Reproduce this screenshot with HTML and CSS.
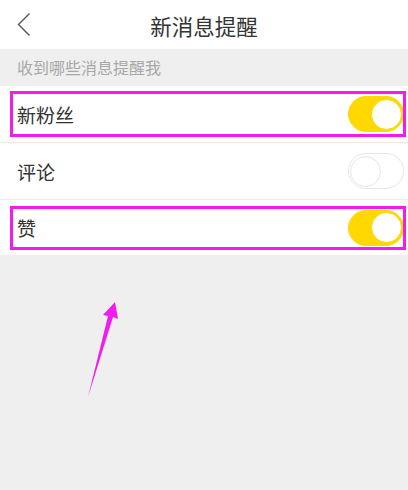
FILE: index.html
```html
<!DOCTYPE html>
<html lang="zh-CN">

<head>
  <title>新消息提醒</title>
  <meta charset="utf-8">
  <meta name="viewport" content="width=device-width, initial-scale=1">

  <link rel="stylesheet" href="styles.css">
</head>

<body>

  <div class="page">

    <div class="header">
      <div class="back">
        <svg width="14" height="26" viewBox="0 0 14 26">
          <polyline points="12.5,1.5 1.5,12.5 12.5,23.5" fill="none" stroke="#555" stroke-width="1.4" />
        </svg>
      </div>
      <div class="title">新消息提醒</div>
      <div></div>
    </div>

    <div class="section-label">收到哪些消息提醒我</div>

    <div class="list">
      <div class="row marked">
        <div class="row-text">新粉丝</div>
        <div class="switch on"><div class="knob"></div></div>
      </div>
      <div class="row">
        <div class="row-text">评论</div>
        <div class="switch"><div class="knob"></div></div>
      </div>
      <div class="row marked last">
        <div class="row-text">赞</div>
        <div class="switch on"><div class="knob"></div></div>
      </div>
    </div>

    <div class="rest">
      <!-- annotation arrow -->
      <svg class="arrow" width="40" height="100" viewBox="0 0 40 100">
        <polygon points="35,1 38,18 33,16 8,96 28,15 23,14" fill="#f21cf2" />
      </svg>
    </div>

  </div>

</body>

</html>
```

FILE: styles.css
```css
    body {
      margin: 0;
      background-color: #efefef;
      font-family: "Noto Sans CJK SC", "Noto Sans", sans-serif;
    }

    .page {
      width: 408px;
      height: 490px;
      display: flex;
      flex-direction: column;
    }

    .header {
      height: 49px;
      background: #fff;
      display: grid;
      grid-template-columns: 60px 1fr 60px;
      align-items: center;
    }

    .back {
      padding-left: 17px;
      padding-top: 1px;
      display: flex;
      align-items: center;
    }

    .title {
      text-align: center;
      font-size: 21.5px;
      color: #333;
      padding-top: 2px;
    }

    .section-label {
      height: 37px;
      line-height: 37px;
      padding-left: 17px;
      font-size: 16px;
      color: #a8a8a8;
    }

    .list {
      background: #fff;
    }

    .row {
      position: relative;
      height: 56px;
      border-bottom: 1px solid #ebebeb;
      display: flex;
      align-items: center;
      justify-content: space-between;
      padding: 0 4px 0 17px;
    }

    .row.last {
      height: 55px;
      border-bottom: none;
    }

    .row-text {
      font-size: 19px;
      color: #333;
    }

    /* magenta highlight boxes */
    .marked::after {
      content: "";
      position: absolute;
      left: 10px;
      right: 2px;
      top: 5px;
      bottom: 5px;
      border: 3px solid #f21cf2;
    }

    .row.last::after {
      top: 6px;
      bottom: 5px;
    }

    .switch {
      width: 56px;
      height: 36px;
      border-radius: 18px;
      box-sizing: border-box;
      border: 1.5px solid #e6e6e6;
      background: #fff;
      display: flex;
      align-items: center;
      padding: 0 1px;
    }

    .switch .knob {
      width: 31px;
      height: 31px;
      border-radius: 50%;
      background: #fff;
      box-sizing: border-box;
      border: 1.5px solid #e6e6e6;
    }

    .switch.on {
      background: #ffd800;
      border-color: #ffd800;
      justify-content: flex-end;
    }

    .switch.on .knob {
      border-color: #ffd800;
    }

    .rest {
      flex: 1;
      position: relative;
    }

    .arrow {
      position: absolute;
      left: 80px;
      top: 46px;
    }
```
